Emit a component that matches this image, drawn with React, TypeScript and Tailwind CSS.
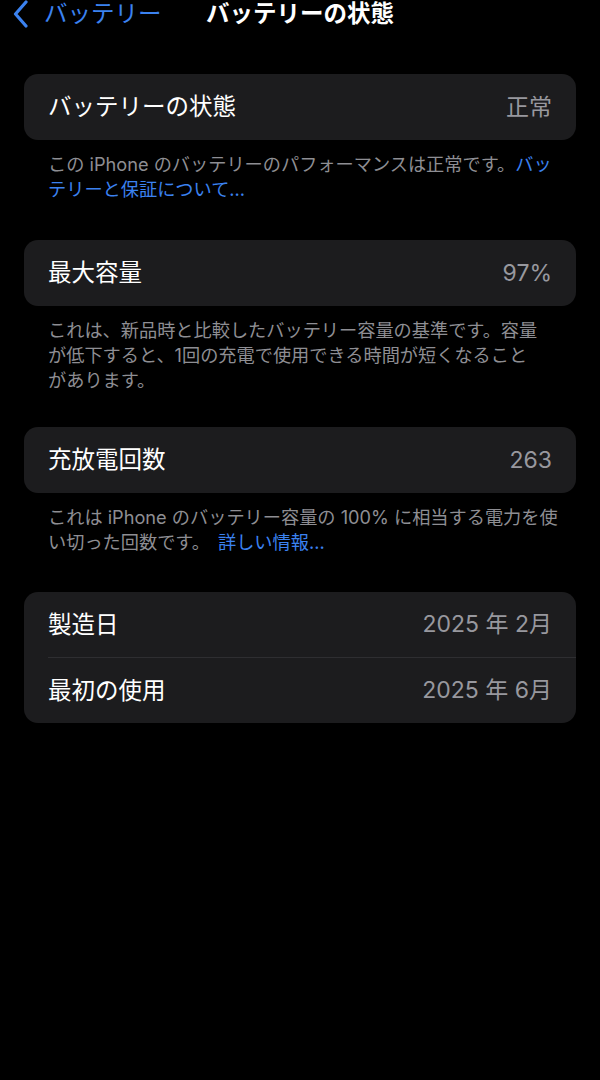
import type { ReactNode } from "react";

const font = { fontFamily: 'Inter, "Noto Sans CJK JP", sans-serif' };

function Row({ label, value, tall = true }: { label: string; value: string; tall?: boolean }) {
	return (
		<div
			className={`flex items-center justify-between pr-6 ${tall ? "h-[66px]" : "h-[65px]"}`}
		>
			<span className="text-[23.5px] text-white">{label}</span>
			<span className="text-[23px] text-[#98989e]">{value}</span>
		</div>
	);
}

function Card({ children }: { children: ReactNode }) {
	return (
		<div className="mx-6 rounded-[14px] bg-[#1c1c1e] pl-6">{children}</div>
	);
}

function Footer({ children, className }: { children: ReactNode; className: string }) {
	return (
		<p
			className={`px-12 pt-3 text-[18.2px] leading-[25px] text-[#8e8e93] whitespace-nowrap ${className}`}
		>
			{children}
		</p>
	);
}

export default function App() {
	return (
		<div className="min-h-[1080px] w-[600px] bg-black" style={font}>
			{/* Navigation bar */}
			<header className="grid grid-cols-[1fr_auto_1fr] items-center h-[28px]">
				<div className="flex items-center gap-[14px] pl-[12px] text-[#3b82f0]">
					<svg width="18" height="28" viewBox="0 0 18 28" fill="none">
						<path
							d="M14 2 L3.5 14 L14 26"
							stroke="currentColor"
							strokeWidth="3.2"
							strokeLinecap="round"
							strokeLinejoin="round"
						/>
					</svg>
					<span className="text-[23.5px] leading-[28px]">バッテリー</span>
				</div>
				<h1 className="text-[23.5px] leading-[28px] font-semibold text-white">
					バッテリーの状態
				</h1>
				<div />
			</header>

			<div className="mt-[46px]">
				<Card>
					<Row label="バッテリーの状態" value="正常" />
				</Card>
				<Footer className="pb-[38px]">
					この iPhone のバッテリーのパフォーマンスは正常です。
					<span className="text-[#3b82f0]">
						バッ
						<br />
						テリーと保証について...
					</span>
				</Footer>

				<Card>
					<Row label="最大容量" value="97%" />
				</Card>
				<Footer className="pb-[34px]">
					これは、新品時と比較したバッテリー容量の基準です。容量
					<br />
					が低下すると、1回の充電で使用できる時間が短くなること
					<br />
					があります。
				</Footer>

				<Card>
					<Row label="充放電回数" value="263" />
				</Card>
				<Footer className="pb-[37px]">
					これは iPhone のバッテリー容量の 100% に相当する電力を使
					<br />
					い切った回数です。 <span className="ml-[3px] text-[#3b82f0]">詳しい情報...</span>
				</Footer>

				<Card>
					<Row label="製造日" value="2025 年 2月" tall={false} />
					<div className="h-px bg-[#2e2e31]" />
					<Row label="最初の使用" value="2025 年 6月" tall={false} />
				</Card>
			</div>
		</div>
	);
}
